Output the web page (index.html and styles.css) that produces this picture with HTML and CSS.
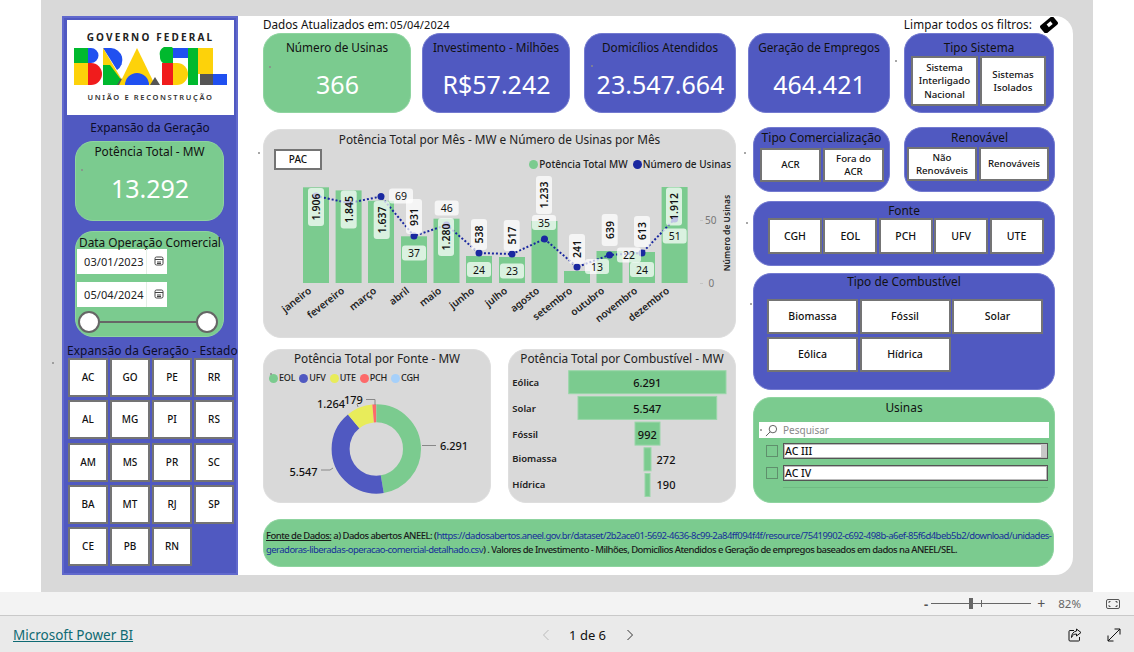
FILE: index.html
```html
<!DOCTYPE html>
<html lang="pt-BR">
<head>
<meta charset="utf-8">
<title>Expansão da Geração</title>
<link rel="stylesheet" href="styles.css">
</head>
<body>
<div class="app">
  <div class="viewer">
    <div class="canvas">
      <div class="page">
        <aside class="sidebar">
          <div class="logo">
            <div class="logo-top">GOVERNO FEDERAL</div>
            <svg class="logo-art" viewBox="73 47 155 39" aria-hidden="true">
              <rect class="g" x="74" y="48" width="14" height="15"/>
              <path class="b" d="M88 48h3a7.500 7.500 0 0 1 0 15h-3z"/>
              <rect class="y" x="74" y="63" width="14" height="22"/>
              <path class="r" d="M88 63h3a11 11 0 0 1 0 22h-3z"/>
              <path class="b" d="M103 48h8a12 12 0 0 1 6 22z"/>
              <path class="y" d="M103 48l22 37h-8l-14-20z"/>
              <path class="g" d="M103 65h7l15 20h-22z"/>
              <path class="k" d="M117 85l4-7 4 7z"/>
              <path class="y" d="M137 48l18 37h-36z"/>
              <path class="b" d="M125 85a12 12 0 0 1 24 0z"/>
              <path class="k" d="M150 85l5-8 5 8z"/>
              <path class="g" d="M173 48v15a8 8 0 0 1-13-7a8 8 0 0 1 13-8z"/>
              <rect class="b" x="173" y="48" width="15" height="10"/>
              <path class="r" d="M162 63h11v22h-11z"/>
              <path class="y" d="M173 63h4a11 11 0 0 1 0 22h-4z"/>
              <rect class="g" x="188" y="48" width="10" height="37"/>
              <rect class="y" x="198" y="48" width="15" height="26"/>
              <rect class="k" x="200" y="74" width="13" height="11"/>
              <rect class="b" x="213" y="74" width="14" height="11"/>
            </svg>
            <div class="logo-bottom">UNIÃO E RECONSTRUÇÃO</div>
          </div>
          <div class="side-title">Expansão da Geração</div>
          <div class="panel green side-kpi">
            <div class="kpi-title kpi-title-side">Potência Total - MW</div>
            <div class="kpi-value">13.292</div>
          </div>
          <div class="panel green date-card">
            <div class="date-title">Data Operação Comercial</div>
            <div class="date-box date-first"><span class="date-text">03/01/2023</span><span class="date-btn"><svg class="cal" viewBox="0 0 10 10"><rect x="1" y="1" width="8" height="8" rx="1.500"/><path d="M1 3.500h8M3 6h4M3 7.500h4"/></svg></span></div>
            <div class="date-box date-second"><span class="date-text">05/04/2024</span><span class="date-btn"><svg class="cal" viewBox="0 0 10 10"><rect x="1" y="1" width="8" height="8" rx="1.500"/><path d="M1 3.500h8M3 6h4M3 7.500h4"/></svg></span></div>
            <div class="range"><span class="knob"></span><span class="range-line"></span><span class="knob"></span></div>
          </div>
          <div class="side-title side-title-state">Expansão da Geração - Estado</div>
          <div class="state-grid">
            <div class="slicer">AC</div><div class="slicer">GO</div><div class="slicer">PE</div><div class="slicer">RR</div>
            <div class="slicer">AL</div><div class="slicer">MG</div><div class="slicer">PI</div><div class="slicer">RS</div>
            <div class="slicer">AM</div><div class="slicer">MS</div><div class="slicer">PR</div><div class="slicer">SC</div>
            <div class="slicer">BA</div><div class="slicer">MT</div><div class="slicer">RJ</div><div class="slicer">SP</div>
            <div class="slicer">CE</div><div class="slicer">PB</div><div class="slicer">RN</div>
          </div>
        </aside>

        <main class="main">
          <header class="top-line">
            <div class="updated"><span>Dados Atualizados em:</span><span class="updated-date">05/04/2024</span></div>
            <div class="clear"><span>Limpar todos os filtros:</span>
              <svg class="eraser" viewBox="0 0 18 16" aria-hidden="true"><rect x="0.500" y="3" width="17" height="10" rx="2" transform="rotate(-40 9 8)" fill="#000"/><rect x="7" y="5.500" width="5" height="3.500" transform="rotate(-40 9.500 7)" fill="#fff"/></svg>
            </div>
          </header>
          <section class="cards">
            <div class="panel green card card-a"><div class="kpi-title">Número de Usinas</div><div class="kpi-value">366</div></div>
            <div class="panel blue card card-b"><div class="kpi-title">Investimento - Milhões</div><div class="kpi-value">R$57.242</div></div>
            <div class="panel blue card card-c"><div class="kpi-title">Domicílios Atendidos</div><div class="kpi-value">23.547.664</div></div>
            <div class="panel blue card card-d"><div class="kpi-title">Geração de Empregos</div><div class="kpi-value">464.421</div></div>
            <div class="panel blue card card-e">
              <div class="kpi-title">Tipo Sistema</div>
              <div class="row-sistema"><div class="slicer small">Sistema Interligado Nacional</div><div class="slicer small">Sistemas Isolados</div></div>
            </div>
          </section>

          <section class="body">
            <div class="col-left">
              <div class="panel grey chart-panel">
                <div class="chart-title">Potência Total por Mês - MW e Número de Usinas por Mês</div>
                <div class="chart-tools">
                  <div class="slicer pac">PAC</div>
                  <div class="legend legend-main">
                    <span class="key"><i class="dot d-green"></i>Potência Total MW</span>
                    <span class="key"><i class="dot d-navy"></i>Número de Usinas</span>
                  </div>
                </div>
                <svg class="chart" viewBox="264 171 471 166" role="img">
                  <g class="bars">
                    <rect x="303" y="187.300" width="26" height="95.700"/>
                    <rect x="335.600" y="190.400" width="26" height="92.600"/>
                    <rect x="368" y="200.800" width="26" height="82.200"/>
                    <rect x="401" y="236.300" width="26" height="46.700"/>
                    <rect x="433.500" y="218.700" width="26" height="64.300"/>
                    <rect x="466" y="256" width="26" height="27"/>
                    <rect x="499" y="257" width="26" height="26"/>
                    <rect x="531.500" y="221" width="26" height="62"/>
                    <rect x="564" y="271" width="26" height="12"/>
                    <rect x="596.500" y="251" width="26" height="32"/>
                    <rect x="629" y="252" width="26" height="31"/>
                    <rect x="661.600" y="187" width="26" height="96"/>
                  </g>
                  <polyline class="line" points="316,196 348.600,203 381,196.500 414,236 446.500,225 479,253 512,254 544.500,239 577,267 609.500,255 642,253 674.600,219"/>
                  <g class="points">
                    <circle cx="316" cy="196" r="3.500"/><circle cx="348.600" cy="203" r="3.500"/><circle cx="381" cy="196.500" r="3.500"/><circle cx="414" cy="236" r="3.500"/><circle cx="446.500" cy="225" r="3.500"/><circle cx="479" cy="253" r="3.500"/><circle cx="512" cy="254" r="3.500"/><circle cx="544.500" cy="239" r="3.500"/><circle cx="577" cy="267" r="3.500"/><circle cx="609.500" cy="255" r="3.500"/><circle cx="642" cy="253" r="3.500"/><circle cx="674.600" cy="219" r="3.500"/>
                  </g>
                  <g class="vbox">
                    <rect x="308" y="188" width="16" height="38" rx="3"/><rect x="340.700" y="190.500" width="16" height="38" rx="3"/><rect x="373.700" y="201" width="16" height="38" rx="3"/><rect x="406" y="199" width="16" height="35" rx="3"/><rect x="438" y="218" width="16" height="38" rx="3"/><rect x="471" y="219" width="16" height="31" rx="3"/><rect x="503.700" y="220" width="16" height="31" rx="3"/><rect x="536" y="176" width="16" height="38" rx="3"/><rect x="569" y="234" width="16" height="30" rx="3"/><rect x="601.700" y="214" width="16" height="32" rx="3"/><rect x="634" y="216" width="16" height="31" rx="3"/><rect x="666" y="187.500" width="16" height="38" rx="3"/>
                  </g>
                  <g class="hbox">
                    <rect x="389" y="188.500" width="24" height="15" rx="3"/><rect x="402" y="245.500" width="24" height="15" rx="3"/><rect x="434.700" y="200.500" width="24" height="15" rx="3"/><rect x="467" y="262" width="24" height="15" rx="3"/><rect x="500" y="263.500" width="24" height="15" rx="3"/><rect x="532" y="215" width="24" height="15" rx="3"/><rect x="585" y="259" width="24" height="15" rx="3"/><rect x="617" y="247.500" width="24" height="15" rx="3"/><rect x="630" y="262" width="24" height="15" rx="3"/><rect x="662.700" y="228.500" width="24" height="15" rx="3"/>
                  </g>
                  <g class="vlab">
                    <text transform="translate(316 207) rotate(-90)">1.906</text><text transform="translate(348.700 209.500) rotate(-90)">1.845</text><text transform="translate(381.700 220) rotate(-90)">1.637</text><text transform="translate(414 217) rotate(-90)">931</text><text transform="translate(446 237) rotate(-90)">1.280</text><text transform="translate(479 234.500) rotate(-90)">538</text><text transform="translate(511.700 235.500) rotate(-90)">517</text><text transform="translate(544 195) rotate(-90)">1.233</text><text transform="translate(577 249) rotate(-90)">241</text><text transform="translate(609.700 230) rotate(-90)">639</text><text transform="translate(642 231) rotate(-90)">613</text><text transform="translate(674 206.500) rotate(-90)">1.912</text>
                  </g>
                  <g class="hlab">
                    <text x="401" y="196">69</text><text x="414" y="253">37</text><text x="446.700" y="208">46</text><text x="479" y="269.500">24</text><text x="512" y="271">23</text><text x="544" y="222.500">35</text><text x="597" y="266.500">13</text><text x="629" y="255">22</text><text x="642" y="269.500">24</text><text x="674.700" y="236">51</text>
                  </g>
                  <g class="xlab">
                    <text transform="translate(312 292) rotate(-38)">janeiro</text><text transform="translate(345 292) rotate(-38)">fevereiro</text><text transform="translate(377 292) rotate(-38)">março</text><text transform="translate(410 292) rotate(-38)">abril</text><text transform="translate(442 292) rotate(-38)">maio</text><text transform="translate(475 292) rotate(-38)">junho</text><text transform="translate(508 292) rotate(-38)">julho</text><text transform="translate(540 292) rotate(-38)">agosto</text><text transform="translate(573 292) rotate(-38)">setembro</text><text transform="translate(605 292) rotate(-38)">outubro</text><text transform="translate(638 292) rotate(-38)">novembro</text><text transform="translate(670 292) rotate(-38)">dezembro</text>
                  </g>
                  <path class="tick" d="M700 220.500h3M700 283.500h3"/>
                  <text class="ytick" x="705" y="220">50</text>
                  <text class="ytick" x="708.500" y="283">0</text>
                  <text class="ytitle" transform="translate(730 233) rotate(-90)">Número de Usinas</text>
                </svg>
              </div>

              <div class="chart-row">
                <div class="panel grey donut-panel">
                  <div class="chart-title small-title">Potência Total por Fonte - MW</div>
                  <div class="legend legend-donut">
                    <span class="key"><i class="dot d-green"></i>EOL</span>
                    <span class="key"><i class="dot d-blue"></i>UFV</span>
                    <span class="key"><i class="dot d-yellow"></i>UTE</span>
                    <span class="key"><i class="dot d-red"></i>PCH</span>
                    <span class="key"><i class="dot d-sky"></i>CGH</span>
                  </div>
                  <svg class="donut" viewBox="264 389 226 113" role="img">
                    <g class="ring" transform="rotate(-90 376.300 449)">
                      <circle class="s1" cx="376.300" cy="449" r="35.700" pathLength="13292" stroke-dasharray="6291 7001"/>
                      <circle class="s2" cx="376.300" cy="449" r="35.700" pathLength="13292" stroke-dasharray="5547 7745" stroke-dashoffset="-6291"/>
                      <circle class="s3" cx="376.300" cy="449" r="35.700" pathLength="13292" stroke-dasharray="1264 12028" stroke-dashoffset="-11838"/>
                      <circle class="s4" cx="376.300" cy="449" r="35.700" pathLength="13292" stroke-dasharray="179 13113" stroke-dashoffset="-13102"/>
                    </g>
                    <path class="leader" d="M422 445.500h14M321 470h9l3-2M358 407l-1-3M375 405v-5.500h-9"/>
                    <text class="dlab" x="440" y="445">6.291</text>
                    <text class="dlab" x="289.500" y="471">5.547</text>
                    <text class="dlab" x="317" y="403.500">1.264</text>
                    <text class="dlab" x="344" y="399">179</text>
                  </svg>
                </div>
                <div class="panel grey funnel-panel">
                  <div class="chart-title small-title">Potência Total por Combustível - MW</div>
                  <svg class="funnel" viewBox="509 368 226 134" role="img">
                    <g class="fbars">
                      <rect x="568.700" y="370.700" width="157.300" height="23"/>
                      <rect x="578" y="396.400" width="138.700" height="23"/>
                      <rect x="635" y="422.100" width="25" height="23"/>
                      <rect x="644" y="447.800" width="7" height="23"/>
                      <rect x="645" y="473.500" width="5" height="23"/>
                    </g>
                    <g class="fcat">
                      <text x="512.300" y="382">Eólica</text><text x="512.300" y="408">Solar</text><text x="512.300" y="434">Fóssil</text><text x="512.300" y="458">Biomassa</text><text x="512.300" y="484">Hídrica</text>
                    </g>
                    <g class="fval">
                      <text x="647.300" y="382.500">6.291</text><text x="647.300" y="408">5.547</text><text x="647.300" y="434">992</text><text x="666" y="459">272</text><text x="666" y="484.500">190</text>
                    </g>
                  </svg>
                </div>
              </div>
            </div>

            <div class="col-right">
              <div class="right-top">
                <div class="panel blue com-panel">
                  <div class="panel-title">Tipo Comercialização</div>
                  <div class="row-com"><div class="slicer small">ACR</div><div class="slicer small">Fora do ACR</div></div>
                </div>
                <div class="panel blue ren-panel">
                  <div class="panel-title">Renovável</div>
                  <div class="row-ren"><div class="slicer small">Não Renováveis</div><div class="slicer small">Renováveis</div></div>
                </div>
              </div>
              <div class="panel blue fonte-panel">
                <div class="panel-title panel-title-fonte">Fonte</div>
                <div class="row-fonte"><div class="slicer">CGH</div><div class="slicer">EOL</div><div class="slicer">PCH</div><div class="slicer">UFV</div><div class="slicer">UTE</div></div>
              </div>
              <div class="panel blue fuel-panel">
                <div class="panel-title panel-title-fuel">Tipo de Combustível</div>
                <div class="grid-fuel"><div class="slicer">Biomassa</div><div class="slicer">Fóssil</div><div class="slicer">Solar</div><div class="slicer">Eólica</div><div class="slicer">Hídrica</div></div>
              </div>
              <div class="panel green usinas-panel">
                <div class="panel-title panel-title-usinas">Usinas</div>
                <div class="search">
                  <svg class="lens" viewBox="0 0 14 14" aria-hidden="true"><circle cx="8.500" cy="5.500" r="4"/><path d="M5.500 8.500L1 13"/></svg>
                  <span>Pesquisar</span>
                </div>
                <div class="item"><span class="check"></span><span class="item-box">AC III<i class="thumb"></i></span></div>
                <div class="item item-second"><span class="check"></span><span class="item-box">AC IV</span></div>
                <div class="list-end"></div>
              </div>
            </div>
          </section>

          <section class="panel green note">
            <p><span class="note-src">Fonte de Dados:</span> a) Dados abertos ANEEL: (<a href="#">https://dadosabertos.aneel.gov.br/dataset/2b2ace01-5692-4636-8c99-2a84ff094f4f/resource/75419902-c692-498b-a6ef-85f6d4beb5b2/download/unidades-<br>geradoras-liberadas-operacao-comercial-detalhado.csv</a>) . Valores de Investimento - Milhões, Domicílios Atendidos e Geração de empregos baseados em dados na ANEEL/SEL.</p>
          </section>
        </main>
      </div>
    </div>
  </div>

  <div class="zoombar">
    <span class="zoom-minus">-</span>
    <span class="zoom-track"><i class="zoom-thumb"></i><i class="zoom-tick"></i></span>
    <span class="zoom-plus">+</span>
    <span class="zoom-pct">82%</span>
    <svg class="fit" viewBox="0 0 14 10" aria-hidden="true"><rect x="0.500" y="0.500" width="13" height="9" rx="1.500"/><path d="M3 4V2.500h1.500M9.500 2.500H11V4M11 6v1.500H9.500M4.500 7.500H3V6"/></svg>
  </div>
  <footer class="footer">
    <a class="brand" href="#">Microsoft Power BI</a>
    <div class="pager">
      <svg class="chev chev-off" viewBox="0 0 8 12" aria-hidden="true"><path d="M6.500 1L1.500 6l5 5"/></svg>
      <span class="page-num">1 de 6</span>
      <svg class="chev" viewBox="0 0 8 12" aria-hidden="true"><path d="M1.500 1l5 5-5 5"/></svg>
    </div>
    <div class="foot-icons">
      <svg class="ficon" viewBox="0 0 14 14" aria-hidden="true"><path d="M6 2.500H2a1 1 0 0 0-1 1V12a1 1 0 0 0 1 1h8.500a1 1 0 0 0 1-1V9"/><path d="M8.500 1l4.500 3.500L8.500 8V6C6 6 4.500 7 3.500 9.500 3.500 6 5.500 3.500 8.500 3z"/></svg>
      <svg class="ficon" viewBox="0 0 14 14" aria-hidden="true"><path d="M1 13L13 1M7.500 1H13v5.500M1 7.500V13h5.500"/></svg>
    </div>
  </footer>
</div>
<i class="mark m1"></i><i class="mark m2"></i><i class="mark m3"></i><i class="mark m4"></i><i class="mark m5"></i><i class="mark m6"></i><i class="mark m7"></i><i class="mark m8"></i><i class="mark m9"></i><i class="mark m10"></i><i class="mark m11"></i>
</body>
</html>
```
FILE: styles.css
```css
* { box-sizing: border-box; }
html, body { margin: 0; height: 100%; }
body { width: 1134px; height: 652px; overflow: hidden; background: #fff; color: #111; font-family: "Noto Sans", "Liberation Sans", sans-serif; position: relative; }

.app { display: flex; flex-direction: column; height: 652px; }
.viewer { height: 592px; padding: 0 41px; background: #fff; }
.canvas { height: 592px; background: #d9d9d9; padding: 16px 20px 0 21px; }
.page { display: flex; height: 559px; background: #fff; border-radius: 0 18px 18px 0; }

.panel { border-radius: 18px; border: 1px solid transparent; }
.green { background: #7bcb8f; border-color: #8fd4a0; }
.blue { background: #5059c1; border-color: #737ad0; }
.grey { background: #d9d9d9; border-color: #dedede; }

/* sidebar */
.sidebar { width: 176px; flex: none; background: #5059c1; border: 2px solid #6169cd; padding: 2px 3px 0; display: flex; flex-direction: column; }
.logo { width: 167px; height: 95px; background: #fff; display: flex; flex-direction: column; align-items: center; flex: none; }
.logo-top { margin-top: 10px; font-size: 10px; line-height: 14px; font-weight: 700; letter-spacing: 2.150px; color: #222; white-space: nowrap; }
.logo-art { display: block; width: 155px; height: 39px; margin-top: 3px; flex: none; }
.logo-art .g { fill: #00b92e; }
.logo-art .b { fill: #2050f0; }
.logo-art .y { fill: #fdd20a; }
.logo-art .r { fill: #f01c1c; }
.logo-art .k { fill: #555; }
.logo-bottom { margin-top: 5px; font-size: 7.500px; line-height: 12px; font-weight: 600; letter-spacing: 1.650px; color: #333; white-space: nowrap; }
.side-title { margin-top: 4px; height: 16px; line-height: 16px; font-size: 11.800px; text-align: center; color: #0d0d2a; white-space: nowrap; flex: none; }
.side-title-state { margin-top: 5px; font-size: 11.900px; letter-spacing: .1px; }
.side-kpi { width: 149px; height: 80px; margin: 6px 0 0 8px; flex: none; display: flex; flex-direction: column; border-radius: 18px; }
.kpi-title { flex: none; padding-top: 5px; height: 21px; line-height: 16px; font-size: 11.750px; text-align: center; color: #111; white-space: nowrap; }
.kpi-title-side { padding-top: 1px; height: 17px; font-size: 11.900px; }
.kpi-value { flex: 1; display: flex; align-items: center; justify-content: center; padding: 0 0 0 1px; font-size: 25px; line-height: 30px; color: #fff; }
.side-kpi .kpi-value { padding-bottom: 3px; }

.date-card { width: 149px; height: 106px; margin: 10px 0 0 8px; flex: none; padding: 2px 0 0 1px; position: relative; }
.date-title { height: 16px; line-height: 16px; font-size: 11.850px; text-align: center; color: #111; white-space: nowrap; }
.date-box { display: flex; width: 90px; height: 25px; background: #fff; }
.date-first { margin-top: -1px; }
.date-second { margin-top: 8px; }
.date-text { width: 69px; padding-left: 7px; line-height: 25px; font-size: 11px; letter-spacing: .1px; color: #222; white-space: nowrap; }
.date-btn { flex: 1; border-left: 1px solid #e4efe6; display: flex; align-items: center; padding-left: 7px; padding-bottom: 1px; }
.cal { width: 10px; height: 10px; fill: none; stroke: #444; stroke-width: 1; }
.range { display: flex; align-items: center; margin: 4px 5px 0 1px; }
.knob { width: 22px; height: 22px; flex: none; border-radius: 50%; background: #fff; border: 2px solid #666; }
.range-line { flex: 1; height: 2px; background: #666; }

.state-grid { display: grid; grid-template-columns: repeat(4, 40px); grid-auto-rows: 39px; gap: 3.250px 2px; margin-left: 1px; }

.slicer { display: flex; align-items: center; justify-content: center; text-align: center; background: #fff; border: 2px solid #747474; font-size: 10px; line-height: 13px; font-weight: 500; color: #111; }
.slicer.small { font-size: 9.700px; line-height: 13.500px; padding: 0 2px; }

/* main */
.main { width: 792px; margin-left: 25px; flex: none; display: flex; flex-direction: column; }
.top-line { display: flex; justify-content: space-between; height: 17px; margin-top: 1px; font-size: 11.700px; line-height: 15px; color: #111; white-space: nowrap; flex: none; }
.updated-date { margin-left: 2px; font-size: 11px; letter-spacing: .1px; }
.clear { display: flex; margin-right: -3px; letter-spacing: .08px; }
.eraser { width: 18px; height: 16px; margin: 0 0 0 8px; }

.cards { display: flex; height: 80px; flex: none; margin-top: -1px; }
.card { display: flex; flex-direction: column; height: 80px; }
.card-a { width: 148px; }
.card-b { width: 148px; margin-left: 11px; }
.card-c { width: 152px; margin-left: 14px; }
.card-d { width: 142px; margin-left: 12px; }
.card-e { width: 150px; margin-left: 14px; }
.row-sistema { display: grid; grid-template-columns: 67px 66px; gap: 2px; height: 50px; margin: 1px 0 0 6px; }

.body { display: flex; margin-top: 14px; flex: none; }
.col-left { width: 473px; flex: none; padding-top: 2px; }
.col-right { width: 302px; margin-left: 17px; flex: none; }

.chart-panel { height: 209px; display: flex; flex-direction: column; }
.chart-title { flex: none; margin-top: 1px; height: 16px; line-height: 16px; font-size: 11.800px; text-align: center; color: #222; white-space: nowrap; }
.chart-tools { display: flex; justify-content: space-between; align-items: flex-end; height: 23px; flex: none; }
.pac { width: 48px; height: 21px; margin-left: 10px; }
.legend { display: flex; white-space: nowrap; font-size: 10px; line-height: 12px; font-weight: 500; color: #222; }
.legend-main { gap: 5px; margin-right: 4px; }
.key { display: flex; align-items: center; gap: 1px; }
.dot { display: block; width: 9px; height: 9px; border-radius: 50%; flex: none; }
.d-green { background: #7bcb8f; }
.d-navy { background: #1a28a0; }
.d-blue { background: #5059c1; }
.d-yellow { background: #e8ec5a; }
.d-red { background: #fd6a6a; }
.d-sky { background: #a6d0fa; }

.chart { display: block; width: 471px; height: 166px; flex: none; margin-top: auto; }
.bars rect { fill: #7bcb8f; }
.line { fill: none; stroke: #1a28a0; stroke-width: 2; stroke-dasharray: 2 2; }
.points circle { fill: #1a28a0; }
.vbox rect, .hbox rect { fill: #fff; fill-opacity: .72; }
.vlab text, .hlab text { font-size: 10.500px; text-anchor: middle; dominant-baseline: central; fill: #111; }
.vlab text { font-weight: 600; }
.xlab text { font-size: 10px; font-weight: 600; text-anchor: end; fill: #222; }
.tick { stroke: #c4c4c4; stroke-width: 1; fill: none; }
.ytick { font-size: 10px; fill: #777; dominant-baseline: central; }
.ytitle { font-size: 8.500px; font-weight: 600; text-anchor: middle; fill: #222; }

.chart-row { display: flex; justify-content: space-between; margin-top: 11px; }
.donut-panel { width: 228px; height: 154px; display: flex; flex-direction: column; }
.funnel-panel { width: 228px; height: 154px; display: flex; flex-direction: column; }
.small-title { margin-top: 0; }
.legend-donut { margin: 5px 0 0 5px; height: 14px; gap: 4px; font-size: 9px; letter-spacing: -.2px; }
.legend-donut .key { gap: 1px; }
.donut { display: block; width: 226px; height: 113px; margin-top: auto; flex: none; }
.ring circle { fill: none; stroke-width: 18; }
.s1 { stroke: #7bcb8f; }
.s2 { stroke: #5059c1; }
.s3 { stroke: #e8ec5a; }
.s4 { stroke: #fd6a6a; }
.leader { fill: none; stroke: #888; stroke-width: 1; }
.dlab { font-size: 11px; font-weight: 500; fill: #111; dominant-baseline: central; }
.funnel { display: block; width: 226px; height: 134px; margin-top: auto; flex: none; }
.fbars rect { fill: #7bcb8f; stroke: #9ad6a9; stroke-width: 1; }
.fcat text { font-size: 9.500px; font-weight: 600; fill: #222; dominant-baseline: central; }
.fval text { font-size: 11px; font-weight: 500; text-anchor: middle; fill: #111; dominant-baseline: central; }

.right-top { display: flex; justify-content: space-between; height: 65px; }
.com-panel { width: 137px; }
.ren-panel { width: 151px; }
.panel-title { height: 16px; line-height: 16px; margin-top: 2px; font-size: 11.900px; text-align: center; color: #111; white-space: nowrap; }
.com-panel .panel-title { font-size: 12.100px; }
.ren-panel .panel-title { margin-top: 1px; margin-bottom: 1px; }
.row-com { display: grid; grid-template-columns: 61px 61px; gap: 2px; height: 34px; margin: 2px 0 0 6px; }
.row-ren { display: grid; grid-template-columns: 70px 70px; gap: 2px; height: 34px; margin: 2px 0 0 2px; }
.fonte-panel { height: 65px; margin-top: 9px; }
.panel-title-fonte { margin-top: 0; }
.row-fonte { display: grid; grid-template-columns: repeat(5, 1fr); gap: 1.500px; width: 275.500px; height: 36px; margin: 0 0 0 14px; }
.row-fonte .slicer { font-size: 10.500px; }
.fuel-panel { height: 117px; margin-top: 7px; }
.panel-title-fuel { margin-top: -1px; }
.grid-fuel { display: grid; grid-template-columns: repeat(3, 91px); grid-auto-rows: 35px; gap: 3px 1.500px; margin: 10px 0 0 13px; }
.grid-fuel .slicer { font-size: 10.500px; }
.usinas-panel { height: 106px; margin-top: 7px; }
.panel-title-usinas { margin-top: 1px; }
.search { display: flex; align-items: center; width: 290px; height: 16px; margin: 7px 0 0 5px; background: #fff; font-size: 10px; color: #888; }
.lens { width: 13px; height: 13px; margin-left: 6px; margin-right: 5px; fill: none; stroke: #555; stroke-width: 1; flex: none; }
.item { display: flex; align-items: center; height: 16px; margin: 5px 0 0 12px; }
.item-second { margin-top: 6px; }
.check { width: 12px; height: 12px; border: 1px solid #5f8f6c; flex: none; }
.item-box { position: relative; display: block; width: 265px; height: 16px; margin-left: 5px; padding-left: 1px; background: #fff; border: 1px solid #555; box-shadow: inset 0 0 0 1px #bbb; font-size: 10.500px; line-height: 14px; font-weight: 500; color: #111; }
.thumb { position: absolute; right: 0; top: 0; width: 6px; height: 13px; background: #c8c8c8; }
.list-end { height: 1px; margin: 6px 6px 0 29px; background: #70bb83; }

.note { width: 791px; height: 48px; margin-top: 16px; border-radius: 18px; flex: none; display: flex; align-items: center; padding: 0 0 0 2px; }
.note p { margin: 0; font-size: 9.500px; line-height: 14px; font-weight: 500; letter-spacing: -.54px; color: #1a1a1a; white-space: nowrap; }
.note-src { text-decoration: underline; }
.note a { color: #17309a; text-decoration: none; font-weight: 400; }

/* bottom bars */
.zoombar { position: relative; height: 24px; flex: none; background: #f3f3f3; border-bottom: 1px solid #c9c9c9; display: flex; align-items: center; justify-content: flex-end; padding-right: 14px; color: #555; }
.zoom-minus { font-size: 13px; font-weight: 700; margin-right: 3px; }
.zoom-track { position: relative; display: block; width: 100px; height: 1px; background: #666; }
.zoom-thumb { position: absolute; left: 38px; top: -5px; width: 4px; height: 11px; background: #666; }
.zoom-tick { position: absolute; left: 50px; top: -3px; width: 1px; height: 7px; background: #666; }
.zoom-plus { margin-left: 6px; width: 10px; font-size: 14px; line-height: 14px; }
.zoom-pct { margin-left: 11px; font-size: 11.500px; color: #666; }
.fit { width: 14px; height: 10px; margin-left: 25px; fill: none; stroke: #555; stroke-width: 1; }
.footer { flex: 1; background: #eaeaea; display: flex; align-items: center; position: relative; padding: 2px 13px 0; }
.brand { font-size: 13.500px; color: #0f6a73; text-decoration: underline; white-space: nowrap; }
.pager { display: flex; align-items: center; margin-left: 409px; }
.chev { width: 8px; height: 12px; fill: none; stroke: #333; stroke-width: 1; }
.chev-off { stroke: #bbb; }
.page-num { margin: 0 20px 0 19px; font-size: 13px; color: #111; white-space: nowrap; }
.foot-icons { display: flex; gap: 25px; margin-left: auto; }
.ficon { width: 14px; height: 14px; fill: none; stroke: #111; stroke-width: 1; }

.mark { position: absolute; width: 2px; height: 2px; border-radius: 50%; background: #8a8a8a; }
.m1 { left: 258px; top: 152px; }
.m2 { left: 269px; top: 66px; }
.m3 { left: 81px; top: 169px; }
.m4 { left: 52px; top: 362px; }
.m5 { left: 895px; top: 60px; }
.m6 { left: 744px; top: 152px; }
.m7 { left: 750px; top: 303px; }
.m8 { left: 760px; top: 429px; }
.m9 { left: 746px; top: 222px; }
.m10 { left: 591px; top: 65px; }
.m11 { left: 270px; top: 373px; }
```
